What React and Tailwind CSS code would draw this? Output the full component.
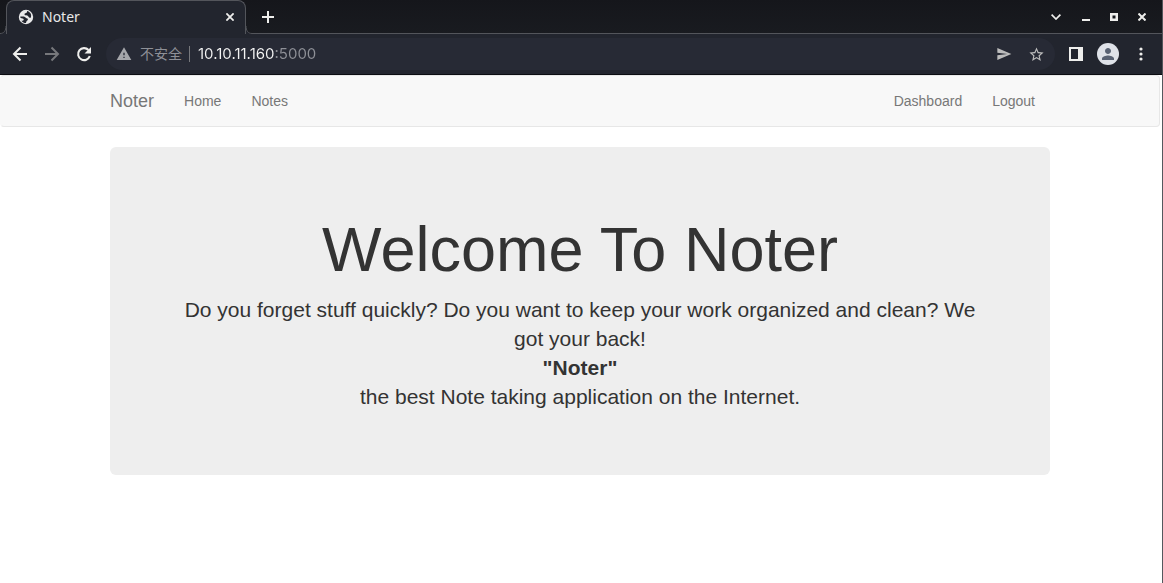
import { MdWarning, MdSend, MdStarBorder, MdPerson } from 'react-icons/md';

const navLink = 'px-[15px] text-sm leading-5 text-[#777] hover:text-[#333]';

function GlobeIcon() {
  return (
    <svg width="16" height="16" viewBox="0 0 16 16">
      <circle cx="8" cy="8" r="7.200" fill="#e9e9ea" />
      <path
        d="M9 2c.3 1.500-.4 2-1.600 2.200C6.300 4.400 6.200 6 7.400 6.300c1.300.3 2.600.1 3 1.300.3 1 1.300 1.400 2.400 1.200.4-1.500.5-2.800-.2-4.200C12 3.300 10.600 2.300 9 2z"
        fill="#22252e"
      />
      <path
        d="M2 7.700c1.500-.3 3.700-.4 4.900.2 1 .5 1.300 1.400 2.400 1.600.8.300.8 1.500 0 2-.9.500-1 1.100-1.300 2.500-1.500.1-3.600-.9-4.600-2.300 1.200.1 2.100-.1 2.300-.9.200-1-1-1.300-1.800-1.500C3.100 9.100 2.200 8.700 2 7.700z"
        fill="#22252e"
      />
    </svg>
  );
}

function ArrowIcon({ forward = false }) {
  return (
    <svg width="16" height="16" viewBox="0 0 16 16" fill="none" stroke="currentColor" strokeWidth="2">
      <path d={forward ? 'M1 8h13M7.500 1.500L14 8l-6.500 6.500' : 'M15 8H2M8.500 1.500L2 8l6.500 6.500'} />
    </svg>
  );
}

function ReloadIcon() {
  return (
    <svg width="16" height="16" viewBox="0 0 16 16">
      <path d="M13.800 10A6 6 0 1 1 12.500 4" fill="none" stroke="currentColor" strokeWidth="2.100" />
      <path d="M15 1v6.500H8.500z" fill="currentColor" />
    </svg>
  );
}

function TabStrip() {
  return (
    <div className="flex h-[34px] items-stretch bg-gradient-to-b from-[#15161b] to-[#191b20]">
      <svg className="shrink-0" width="6" height="34" viewBox="0 0 6 34" fill="none">
        <path d="M0 34v-.5c4 0 6-3 6-7.500v8z" fill="#22252e" />
        <path d="M0 33.500c4 0 6-3 6-7.500" stroke="#53555b" />
      </svg>
      <div className="flex w-60 shrink-0 items-center rounded-t-lg border-x border-t border-[#53555b] bg-[#22252e] pb-[2px] pl-[11px] pr-[7px] text-[#e8e8e8]">
        <GlobeIcon />
        <span className="ml-2 flex-1 text-sm leading-5">Noter</span>
        <button aria-label="Close tab" className="flex size-4 items-center justify-center text-[#eeeeec]">
          <svg width="8" height="8" viewBox="0 0 8 8" stroke="currentColor" strokeWidth="1.800"><path d="M.4.4l7.200 7.200M7.600.4L.4 7.600" /></svg>
        </button>
      </div>
      <div className="flex flex-1 items-stretch text-[#eeeeec]">
        <svg className="shrink-0" width="6" height="34" viewBox="0 0 6 34" fill="none">
          <path d="M6 34v-.5c-4 0-6-3-6-7.500v8z" fill="#22252e" />
          <path d="M6 33.500c-4 0-6-3-6-7.500" stroke="#53555b" />
        </svg>
        <div className="flex flex-1 items-center justify-between border-b border-[#53555b] pl-2 pr-3">
          <button aria-label="New tab" className="flex size-4 items-center justify-center">
            <svg width="12" height="12" viewBox="0 0 12 12" stroke="currentColor" strokeWidth="2"><path d="M0 6h12M6 0v12" /></svg>
          </button>
          <div className="flex items-center gap-3">
            <button aria-label="Search tabs" className="mr-[2px] flex size-4 items-center justify-center">
              <svg width="10" height="6" viewBox="0 0 10 6" fill="none" stroke="currentColor" strokeWidth="1.700"><path d="M.6.6L5 5 9.400.6" /></svg>
            </button>
            <button aria-label="Minimize" className="flex size-4 items-center justify-center">
              <svg width="8" height="8" viewBox="0 0 8 8" fill="currentColor"><path d="M0 6h8v2H0z" /></svg>
            </button>
            <button aria-label="Maximize" className="flex size-4 items-center justify-center">
              <svg width="8" height="8" viewBox="0 0 8 8" fill="currentColor" fillRule="evenodd"><path d="M0 0h8v8H0zM2.500 2.500v3h3v-3z" /></svg>
            </button>
            <button aria-label="Close window" className="flex size-4 items-center justify-center">
              <svg width="8" height="8" viewBox="0 0 8 8" stroke="currentColor" strokeWidth="2"><path d="M.5.5l7 7M7.500.5l-7 7" /></svg>
            </button>
          </div>
        </div>
      </div>
    </div>
  );
}

function Toolbar() {
  return (
    <div className="flex h-[41px] items-center border-b border-[#0b0c11] bg-[#22252e] pl-3 pr-[13px] text-[#eeeeec]">
      <div className="flex items-center gap-4">
        <button aria-label="Back"><ArrowIcon /></button>
        <button aria-label="Forward" className="text-[#77787c]"><ArrowIcon forward /></button>
        <button aria-label="Reload"><ReloadIcon /></button>
      </div>
      <div className="mx-[14px] flex h-8 flex-1 items-center rounded-full bg-[#272a35] px-[10px] text-[#a5a6aa]">
        <MdWarning size={16} />
        <label htmlFor="address" className="ml-2 border-r border-[#77787c] pr-[7px] text-sm leading-4 text-[#8e9097]">不安全</label>
        <input
          id="address"
          defaultValue="10.10.11.160:5000"
          className="ml-2 min-w-0 flex-1 bg-[linear-gradient(to_right,#f4f4f4_77px,#8e9097_77px)] bg-clip-text font-['Inter'] text-[15px] leading-5 text-transparent outline-none"
        />
        <button aria-label="Share" className="text-[#bdbdbd]"><MdSend size={16} /></button>
        <button aria-label="Bookmark" className="ml-4 text-[#bdbdbd]"><MdStarBorder size={17} /></button>
      </div>
      <button aria-label="Side panel">
        <svg width="14" height="14" viewBox="0 0 14 14" fill="currentColor" fillRule="evenodd"><path d="M0 0h14v14H0zM2 2v10h7V2z" /></svg>
      </button>
      <button aria-label="Profile" className="ml-[14px] flex size-[22px] items-center justify-center rounded-full bg-[#dfe2e8] text-[#596273]">
        <MdPerson size={18} />
      </button>
      <button aria-label="Menu" className="ml-[14px] flex w-4 justify-center">
        <svg width="4" height="14" viewBox="0 0 4 14" fill="currentColor"><circle cx="2" cy="2" r="1.600" /><circle cx="2" cy="7" r="1.600" /><circle cx="2" cy="12" r="1.600" /></svg>
      </button>
    </div>
  );
}

function SiteNav() {
  return (
    <nav className="rounded-[4px] border border-[#e7e7e7] border-l-[#f8f8f8] bg-[#f8f8f8]">
      <div className="mx-auto flex h-[50px] max-w-[940px] items-center">
        <a href="#" className="pr-[15px] text-lg leading-5 text-[#777]">Noter</a>
        <a href="#" className={navLink}>Home</a>
        <a href="#" className={navLink}>Notes</a>
        <div className="ml-auto flex">
          <a href="#" className={navLink}>Dashboard</a>
          <a href="#" className={navLink}>Logout</a>
        </div>
      </div>
    </nav>
  );
}

export default function App() {
  return (
    <div className="flex min-h-screen flex-col bg-white font-['Noto_Sans','Noto_Sans_CJK_SC',sans-serif]">
      <header className="border-r border-[#53555b]">
        <TabStrip />
        <Toolbar />
      </header>
      <div className="flex-1 border-r border-[#55585e] pr-[2px] font-['Liberation_Sans',Arial,sans-serif] text-[#333]">
        <SiteNav />
        <main className="mx-auto mt-5 max-w-[940px] rounded-md bg-[#eee] px-[60px] pb-[64px] pt-[68px] text-center">
          <h1 className="mb-[11px] text-[63px] font-medium leading-[69px]">Welcome To Noter</h1>
          <p className="text-[21px] leading-[29px]">
            Do you forget stuff quickly? Do you want to keep your work organized and clean? We got your back!
            <br />
            <strong>"Noter"</strong>
            <br />
            the best Note taking application on the Internet.
          </p>
        </main>
      </div>
    </div>
  );
}
